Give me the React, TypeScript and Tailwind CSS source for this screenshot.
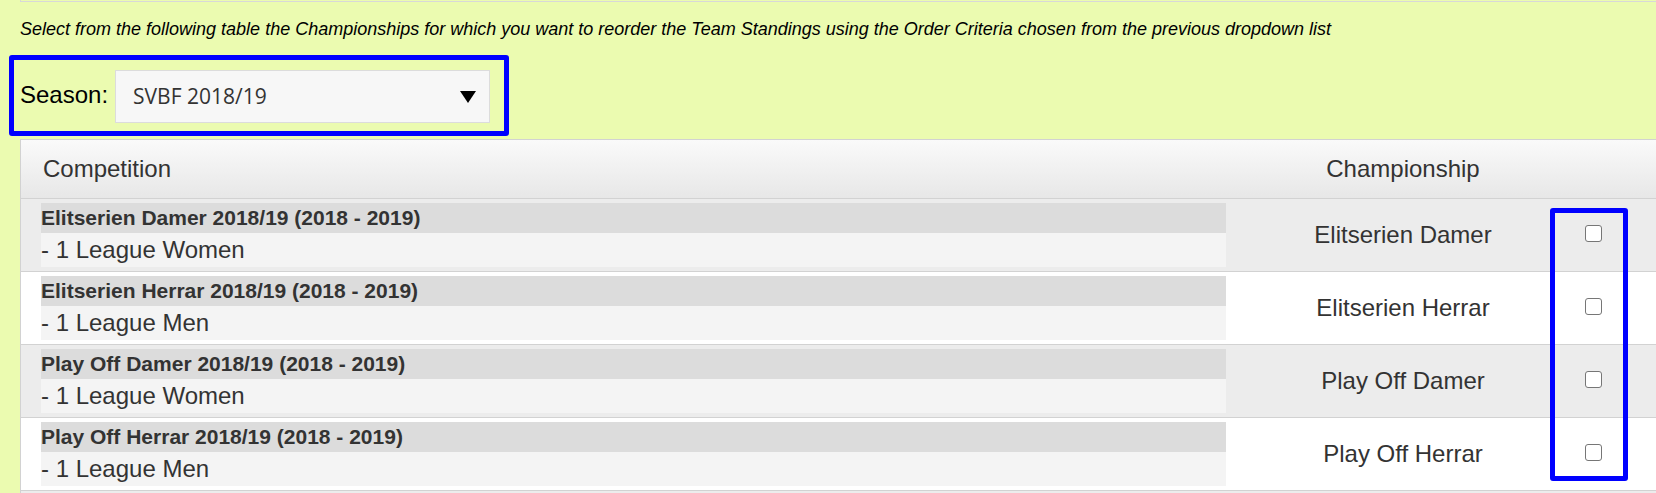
const rows = [
  { title: "Elitserien Damer 2018/19 (2018 - 2019)", sub: "- 1 League Women", champ: "Elitserien Damer" },
  { title: "Elitserien Herrar 2018/19 (2018 - 2019)", sub: "- 1 League Men", champ: "Elitserien Herrar" },
  { title: "Play Off Damer 2018/19 (2018 - 2019)", sub: "- 1 League Women", champ: "Play Off Damer" },
  { title: "Play Off Herrar 2018/19 (2018 - 2019)", sub: "- 1 League Men", champ: "Play Off Herrar" },
];

const App = () => {
  return (
    <div className="h-[493px] w-full overflow-hidden bg-[#ebfbb0] font-['Liberation_Sans',Arial,sans-serif]">
      <div className="ml-[20px] h-[2px] border-b border-l border-[#d8d8d8]" />

      <p className="mt-[17px] pl-[20px] text-[18px] italic leading-[20px] text-black">
        Select from the following table the Championships for which you want to reorder the Team Standings using the
        Order Criteria chosen from the previous dropdown list
      </p>

      <div className="mt-[16px] ml-[9px] flex h-[81px] w-[500px] items-center rounded-[3px] border-[5px] border-[#0000ff] pt-[2px] pl-[6px]">
        <span className="mb-[3px] text-[24px] text-black">Season:</span>

        <div className="ml-[7px] flex h-[53px] w-[375px] items-center justify-between border border-[#dcdcdc] bg-[#f7f7f7] pr-[13px] pl-[17px]">
          <span className="font-['Open_Sans',sans-serif] text-[21px] text-[#333]">SVBF 2018/19</span>
          <svg width="16" height="12" viewBox="0 0 16 12">
            <polygon points="0,0 16,0 8,12" fill="#000" />
          </svg>
        </div>
      </div>

      <div className="relative mt-[3px] ml-[20px] border-t border-l border-[#d2d2d2] text-[#333]">
        <div className="grid h-[59px] grid-cols-[1225px_314px_66px_1fr] items-center border-b border-[#d2d2d2] bg-gradient-to-b from-[#fafafa] to-[#e7e7e7] text-[24px]">
          <div className="pl-[22px]">Competition</div>
          <div className="text-center">Championship</div>
          <div />
          <div />
        </div>

        {rows.map((row, index) => (
          <div
            key={row.title}
            className={`grid h-[73px] grid-cols-[1225px_314px_66px_1fr] items-center border-b border-[#d2d2d2] ${
              index % 2 === 0 ? "bg-[#ececec]" : "bg-white"
            }`}
          >
            <div className="px-[20px] py-[4px]">
              <div className="flex h-[30px] items-center bg-[#dcdcdc] text-[21px] font-bold">{row.title}</div>
              <div className="flex h-[34px] items-center bg-[#f4f4f4] text-[24px]">{row.sub}</div>
            </div>
            <div className="text-center text-[24px]">{row.champ}</div>
            <div className="flex justify-center">
              <span className="mb-[4px] block h-[17px] w-[17px] rounded-[3px] border border-[#767676] bg-white" />
            </div>
            <div />
          </div>
        ))}

        <div className="h-[20px] bg-[#ececec]" />

        <div className="absolute top-[68px] left-[1529px] h-[273px] w-[78px] rounded-[3px] border-[5px] border-[#0000ff]" />
      </div>
    </div>
  );
};

export default App;
